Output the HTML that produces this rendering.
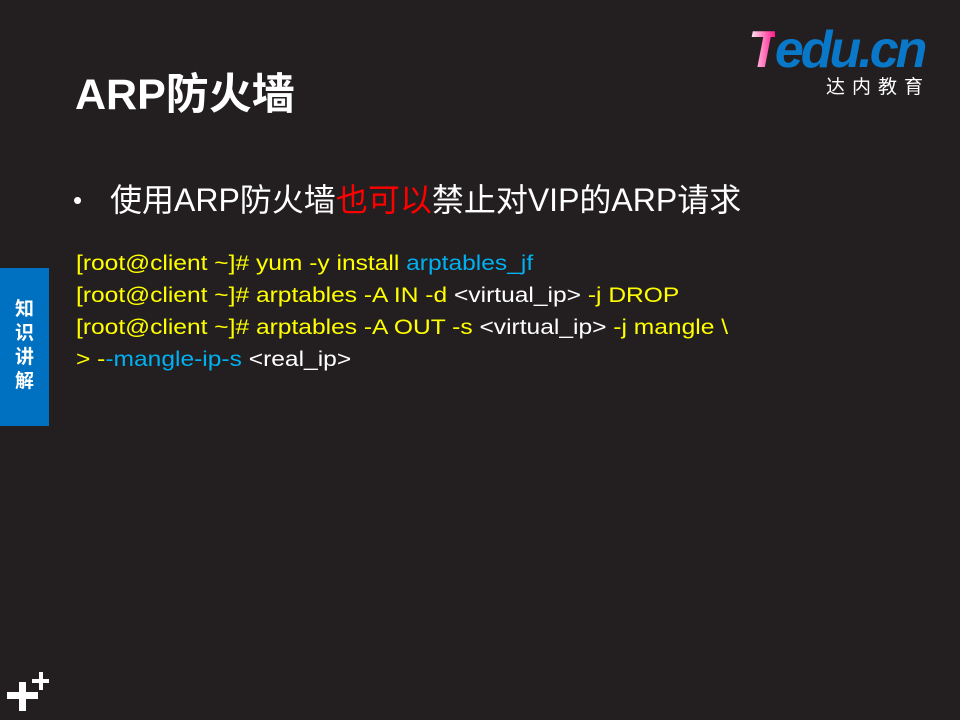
<!DOCTYPE html>
<html><head><meta charset="utf-8"><style>
html,body{margin:0;padding:0}
body{width:960px;height:720px;background:#231f20;position:relative;overflow:hidden;font-family:"Liberation Sans","Noto Sans CJK SC",sans-serif}
.t{position:absolute;left:75px;top:66px;color:#fff;font-weight:bold;font-size:43px;line-height:58px}
.s{position:absolute;left:110px;top:177px;color:#fff;font-size:32px;line-height:46px;white-space:nowrap}
.b{position:absolute;left:73px;top:178px;color:#fff;font-size:26px;line-height:44px}
.c{position:absolute;left:76px;top:248px;font-size:21px;line-height:32px;color:#ffff00;white-space:nowrap;transform:scaleX(1.17);transform-origin:0 0}
.bl{color:#00b0f0}.w{color:#fff}.r{color:#ff0000}
.tab{position:absolute;left:0;top:268px;width:49px;height:158px;background:#0070c0;color:#fff;font-weight:bold;font-size:19px;line-height:24px;text-align:center;padding-top:28px;box-sizing:border-box;font-family:"Noto Sans CJK SC",sans-serif}
.logo{position:absolute;left:748px;top:22px;font-family:"Liberation Sans",sans-serif;font-weight:bold;font-style:italic;font-size:52px;letter-spacing:-3px;line-height:56px;color:#0a78c8}
.logo .T{background:linear-gradient(90deg,#fff,#ff1a8c);-webkit-background-clip:text;color:transparent}
.lc{position:absolute;left:826px;top:73px;color:#fff;font-size:19px;letter-spacing:7px;font-family:"Noto Sans CJK SC",sans-serif;line-height:26px}
.p{position:absolute;background:#fff}
</style></head><body>
<div class="logo"><span class="T">T</span>edu.cn</div>
<div class="lc">达内教育</div>
<div class="t">ARP防火墙</div>
<div class="b">•</div>
<div class="s">使用ARP防火墙<span class="r">也可以</span>禁止对VIP的ARP请求</div>
<div class="c">
<div>[root@client ~]# yum -y install <span class="bl">arptables_jf</span></div>
<div>[root@client ~]# arptables -A IN -d <span class="w">&lt;virtual_ip&gt;</span> -j DROP</div>
<div>[root@client ~]# arptables -A OUT -s <span class="w">&lt;virtual_ip&gt;</span> -j mangle \</div>
<div>&gt; -<span class="bl">-mangle-ip-s</span> <span class="w">&lt;real_ip&gt;</span></div>
</div>
<div class="tab">知<br>识<br>讲<br>解</div>
<div class="p" style="left:7px;top:692px;width:31px;height:7px"></div>
<div class="p" style="left:19px;top:682px;width:7px;height:29px"></div>
<div class="p" style="left:32px;top:679px;width:17px;height:4px"></div>
<div class="p" style="left:39px;top:672px;width:4px;height:18px"></div>
</body></html>
